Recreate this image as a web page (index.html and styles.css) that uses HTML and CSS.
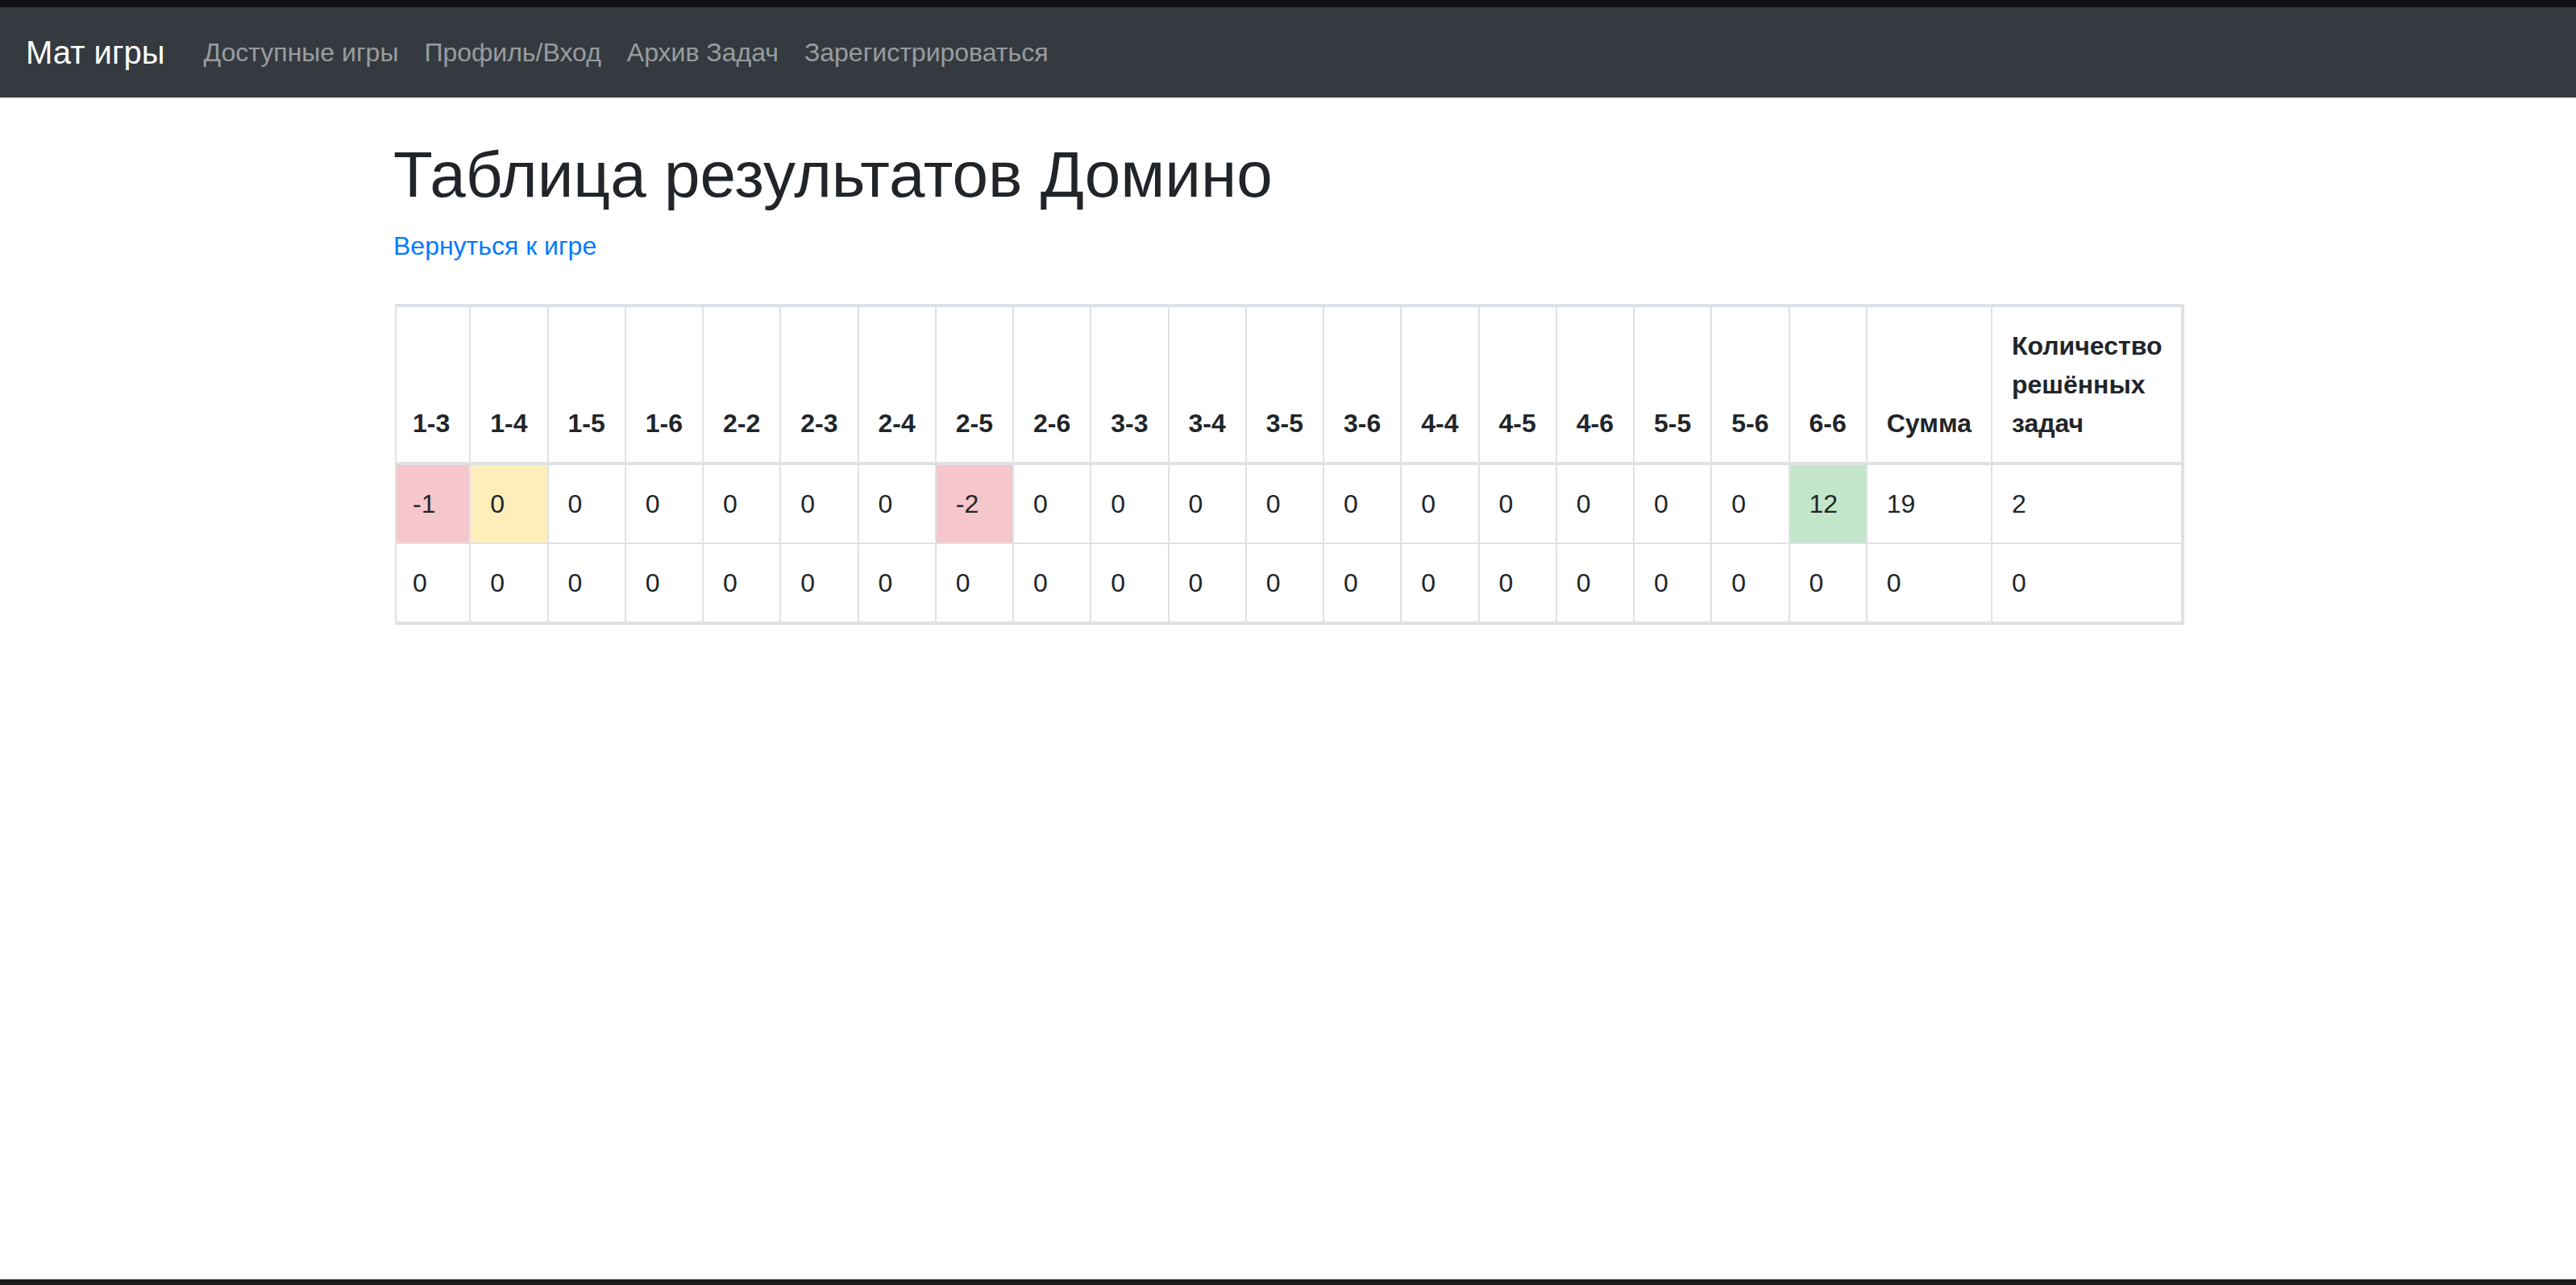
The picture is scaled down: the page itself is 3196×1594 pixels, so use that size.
FILE: index.html
```html
<!DOCTYPE html>
<html lang="ru">
<head>
<meta charset="utf-8">
<title>Таблица результатов Домино</title>
<link rel="stylesheet" href="styles.css">
</head>
<body>
<div class="page">
  <div class="strip strip-top"></div>
  <nav class="navbar">
    <a class="brand" href="#">Мат игры</a>
    <ul class="nav">
      <li><a class="nav-link" href="#">Доступные игры</a></li>
      <li><a class="nav-link" href="#">Профиль/Вход</a></li>
      <li><a class="nav-link" href="#">Архив Задач</a></li>
      <li><a class="nav-link" href="#">Зарегистрироваться</a></li>
    </ul>
  </nav>
  <main class="container">
    <h1 class="title">Таблица результатов Домино</h1>
    <p class="back"><a href="#">Вернуться к игре</a></p>
    <table class="results">
      <thead>
        <tr>
          <th>1-3</th><th>1-4</th><th>1-5</th><th>1-6</th><th>2-2</th><th>2-3</th><th>2-4</th><th>2-5</th><th>2-6</th><th>3-3</th><th>3-4</th><th>3-5</th><th>3-6</th><th>4-4</th><th>4-5</th><th>4-6</th><th>5-5</th><th>5-6</th><th>6-6</th><th>Сумма</th><th class="wrap">Количество решённых задач</th>
        </tr>
      </thead>
      <tbody>
        <tr>
          <td class="danger">-1</td><td class="warning">0</td><td>0</td><td>0</td><td>0</td><td>0</td><td>0</td><td class="danger">-2</td><td>0</td><td>0</td><td>0</td><td>0</td><td>0</td><td>0</td><td>0</td><td>0</td><td>0</td><td>0</td><td class="success">12</td><td>19</td><td>2</td>
        </tr>
        <tr>
          <td>0</td><td>0</td><td>0</td><td>0</td><td>0</td><td>0</td><td>0</td><td>0</td><td>0</td><td>0</td><td>0</td><td>0</td><td>0</td><td>0</td><td>0</td><td>0</td><td>0</td><td>0</td><td>0</td><td>0</td><td>0</td>
        </tr>
      </tbody>
    </table>
  </main>
  <div class="strip strip-bottom"></div>
</div>
</body>
</html>
```

FILE: styles.css
```css
html, body {
  margin: 0;
  padding: 0;
}
body {
  font-family: "Liberation Sans", Arial, Helvetica, sans-serif;
  font-size: 32px;
  line-height: 1.5;
  color: #212529;
  background: #fff;
}
.page {
  display: flex;
  flex-direction: column;
  height: 100vh;
  overflow: hidden;
}
.strip {
  flex: 0 0 auto;
}
.strip-top {
  height: 9px;
  background: #111213;
}
.strip-bottom {
  height: 7px;
  background: #1b1d1c;
  margin-top: auto;
}
.navbar {
  flex: 0 0 auto;
  display: flex;
  align-items: center;
  background: #343a40;
  padding: 16px 32px;
}
.brand {
  display: inline-block;
  padding: 10px 0;
  margin-right: 32px;
  font-size: 40px;
  line-height: 60px;
  color: #fff;
  text-decoration: none;
  white-space: nowrap;
}
.nav {
  display: flex;
  list-style: none;
  margin: 0;
  padding: 0;
}
.nav-link {
  display: block;
  padding: 16px;
  line-height: 48px;
  color: rgba(255, 255, 255, 0.5);
  text-decoration: none;
}
.container {
  flex: 1 1 auto;
  box-sizing: border-box;
  width: 2280px;
  margin: 48px auto 0;
  padding: 0 30px;
}
.title {
  margin: 0 0 16px;
  font-size: 80px;
  font-weight: 500;
  line-height: 1.2;
}
.back {
  margin: 0 0 48px;
}
.back a {
  color: #007bff;
  text-decoration: none;
}
.results {
  width: 100%;
  margin-left: 2px;
  border-collapse: collapse;
  border-style: solid;
  border-color: #dee2e6;
  border-width: 4px 4px 4px 2px;
  margin-bottom: 32px;
}
.results th,
.results td {
  padding: 24px;
  border: 2px solid #dee2e6;
  text-align: left;
}
.results th:first-child,
.results td:first-child {
  padding-left: 20px;
}
.results th {
  font-weight: 700;
  vertical-align: bottom;
  border-bottom-width: 4px;
  white-space: nowrap;
}
.results th.wrap {
  white-space: normal;
}
.results td {
  vertical-align: top;
}
.results .danger {
  background: #f5c6cb;
}
.results .warning {
  background: #ffeeba;
}
.results .success {
  background: #c3e6cb;
}
```
